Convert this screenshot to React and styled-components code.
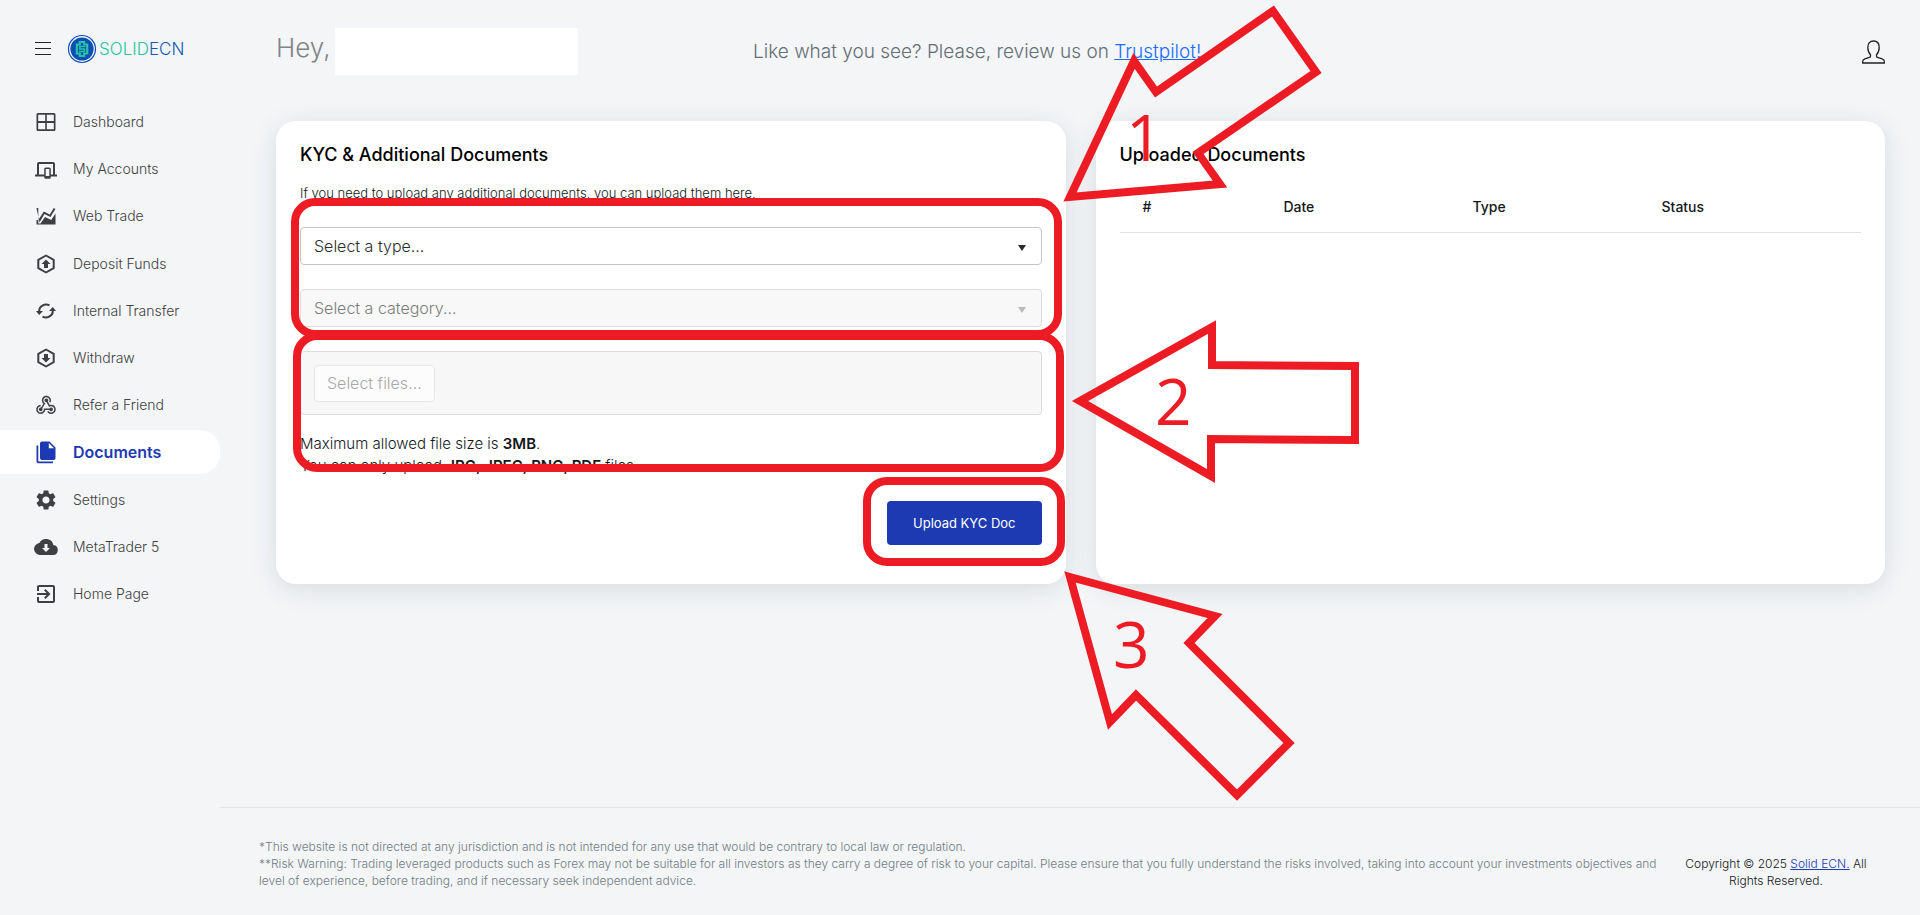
import React from "react";
import styled, { createGlobalStyle, css } from "styled-components";
import { MdSettings } from "react-icons/md";

const ink = "#3e3f42";
const brand = "#1e3ab3";
const red = "#ed1c24";

const GlobalStyle = createGlobalStyle`
  *, *::before, *::after { box-sizing: border-box; }
  body {
    margin: 0;
    background: #f3f5f7;
    color: #14171a;
    font-family: Inter, "Liberation Sans", sans-serif;
    font-size: 15px;
    font-weight: 300;
  }
  button, select { font: inherit; }
`;

const Page = styled.div`
  position: relative;
  display: flex;
  min-height: 100vh;
`;

/* ---------- sidebar ---------- */

const Sidebar = styled.aside`
  flex: 0 0 220px;
  display: flex;
  flex-direction: column;
`;

const SidebarHead = styled.div`
  display: flex;
  align-items: center;
  gap: 16px;
  height: 100px;
  padding: 0 0 2px 35px;
`;

const MenuButton = styled.button`
  display: flex;
  padding: 0;
  border: 0;
  background: none;
  color: #222;
`;

const Logo = styled.a`
  display: flex;
  align-items: center;
  gap: 2px;
  color: #27c3a3;
  font-size: 17px;
  line-height: 28px;
  text-decoration: none;
`;

const LogoAccent = styled.span`
  color: #1559b7;
`;

const NavList = styled.ul`
  display: flex;
  flex-direction: column;
  justify-content: space-between;
  height: 516px;
  margin: 0;
  padding: 0;
  list-style: none;
`;

const NavLink = styled.a`
  display: flex;
  align-items: center;
  gap: 15px;
  height: 44px;
  padding-left: 34px;
  color: ${ink};
  font-size: 14px;
  line-height: 20px;
  text-decoration: none;
  svg { flex: none; }
  ${({ $active }) =>
    $active &&
    css`
      border-radius: 0 20px 20px 0;
      background: #fff;
      color: ${brand};
      font-size: 16px;
      font-weight: 600;
    `}
`;

/* ---------- main column ---------- */

const Main = styled.div`
  flex: 1;
  min-width: 0;
  display: flex;
  flex-direction: column;
`;

const Header = styled.header`
  display: grid;
  grid-template-columns: 477px 1fr auto;
  align-items: center;
  height: 103px;
  padding: 0 35px 0 56px;
`;

const Greeting = styled.h1`
  display: flex;
  align-items: flex-start;
  gap: 5px;
  margin: 0;
  color: #828385;
  font-size: 26px;
  font-weight: 300;
  line-height: 40px;
`;

const NameBlock = styled.span`
  width: 243px;
  height: 47px;
  background: #fff;
`;

const Review = styled.p`
  margin: 0;
  color: #656e75;
  font-size: 19px;
  line-height: 24px;
  a { color: #1a6dfd; }
`;

const Cards = styled.main`
  display: grid;
  grid-template-columns: 1fr 1fr;
  gap: 30px;
  padding: 18px 35px 0 56px;
`;

const Card = styled.section`
  min-height: 463px;
  padding: 24px;
  border-radius: 20px;
  background: #fff;
  box-shadow: 0 5px 26px rgba(50, 62, 78, 0.13);
`;

const CardTitle = styled.h2`
  margin: 0;
  color: #000;
  font-size: 18px;
  font-weight: 500;
  line-height: 20px;
`;

const Form = styled.form`
  display: flex;
  flex-direction: column;
  gap: 24px;
`;

const Hint = styled.p`
  margin: 18px 0 0;
  font-size: 13px;
  line-height: 20px;
`;

const Field = styled.label`
  position: relative;
  display: block;
  &::after {
    content: "";
    position: absolute;
    top: 18px;
    right: 16px;
    border: 4px solid transparent;
    border-top: 6px solid ${({ $muted }) => ($muted ? "#b9bcbc" : "#2b2b2b")};
    border-bottom: 0;
  }
`;

const Select = styled.select`
  display: block;
  width: 100%;
  height: 38px;
  padding: 0 13px;
  appearance: none;
  border: 1px solid #c4c4c4;
  border-radius: 4px;
  background: #fff;
  color: #2b2b2b;
  font-size: 16px;
  &:disabled {
    border-color: #dcdcdc;
    background: #f8f8f8;
    color: #7c7c7c;
    opacity: 1;
  }
`;

const DropZone = styled.div`
  display: flex;
  align-items: center;
  height: 64px;
  padding: 0 13px;
  border: 1px solid #dcdcdc;
  border-radius: 4px;
  background: #f7f7f7;
`;

const PickButton = styled.button`
  height: 37px;
  padding: 0 12px;
  border: 1px solid #e6e6e6;
  border-radius: 4px;
  background: #fcfcfc;
  color: #a8a8a8;
  font-size: 16px;
`;

const Limits = styled.p`
  margin: -6px 0 0;
  line-height: 22px;
  strong { font-weight: 600; }
`;

const SubmitButton = styled.button`
  align-self: flex-end;
  height: 44px;
  padding: 0 26px;
  border: 0;
  border-radius: 4px;
  background: ${brand};
  color: #fff;
  font-size: 13px;
  font-weight: 400;
`;

const Table = styled.table`
  width: 100%;
  margin-top: 17px;
  border-collapse: collapse;
  table-layout: fixed;
`;

const Th = styled.th`
  width: ${({ $width }) => $width};
  height: 50px;
  padding: 0 23px;
  border-bottom: 1px solid #dee2e6;
  font-size: 14px;
  font-weight: 500;
  text-align: left;
`;

/* ---------- footer ---------- */

const Footer = styled.footer`
  display: flex;
  align-items: flex-end;
  gap: 16px;
  margin-top: auto;
  padding: 30px 44px 26px 39px;
  border-top: 1px solid #e1e4e8;
  font-size: 12px;
  line-height: 17px;
`;

const Disclaimer = styled.p`
  flex: 1;
  margin: 0;
  color: #727c82;
`;

const Copyright = styled.p`
  flex: 0 0 200px;
  margin: 0;
  text-align: center;
  a { color: ${brand}; }
`;

/* ---------- annotations ---------- */

const Annotations = styled.svg`
  position: absolute;
  top: 0;
  left: 0;
  width: 100%;
  pointer-events: none;
  fill: none;
  stroke: ${red};
  stroke-width: 8px;
  stroke-miterlimit: 10;
  text {
    fill: ${red};
    stroke: none;
    font-family: "Open Sans", "Noto Sans", sans-serif;
    font-size: 64px;
    font-weight: 400;
  }
`;

const Glyph = ({ size = 24, children, ...rest }) => (
  <svg width={size} height={size} viewBox="0 0 24 24" fill="currentColor" aria-hidden="true" {...rest}>
    {children}
  </svg>
);

const DashboardIcon = () => (
  <Glyph>
    <path d="M4 3h16a1.500 1.500 0 0 1 1.500 1.500v15A1.500 1.500 0 0 1 20 21H4a1.500 1.500 0 0 1-1.500-1.500v-15A1.500 1.500 0 0 1 4 3zm.2 1.700V11h7V4.700zm8.600 0V11h7V4.700zM4.200 13v6.300h7V13zm8.600 0v6.300h7V13z" fillRule="evenodd" />
  </Glyph>
);
const AccountsIcon = () => (
  <Glyph>
    <path d="M3 17.500V7a2 2 0 0 1 2-2h14a2 2 0 0 1 2 2v10.500h2v2h-6.200v.8a1.500 1.500 0 0 1-1.500 1.500h-3.600a1.500 1.500 0 0 1-1.500-1.500v-.8H1v-2zm2 0h5.200V12a1.500 1.500 0 0 1 1.500-1.500h3.600a1.500 1.500 0 0 1 1.500 1.500v5.500H19V7H5zm6.700-5.500v7h3.600v-7z" fillRule="evenodd" />
  </Glyph>
);
const ChartIcon = () => (
  <Glyph>
    <path d="M2.500 4h1.800v12L9.800 7.500l6 3 4-6.500 1.600.9-5 8-6-3L5.500 18.500z" />
    <path d="M2.500 16v4.500h19V9.500l-4.300 6.500-6.200-3-4.500 6.500H4.300V16z" />
  </Glyph>
);
const HexArrow = ({ up }) => (
  <Glyph>
    <path d="M12 3.500l7.700 4.300v8.400L12 20.500l-7.700-4.300V7.800z" fill="none" stroke="currentColor" strokeWidth="2" strokeLinejoin="round" />
    <path d="M12 7.500l4.500 4.500H14v4h-4v-4H7.500z" transform={up ? undefined : "rotate(180 12 12)"} />
  </Glyph>
);
const TransferIcon = () => (
  <Glyph>
    <path d="M5.200 12.500A7 6.500 0 0 1 15.500 6.400M18.800 11.500A7 6.500 0 0 1 8.500 17.600" fill="none" stroke="currentColor" strokeWidth="2" />
    <path d="M2 12h7l-3.800 4zM22 12h-7l3.800-4z" />
  </Glyph>
);
const WebhookIcon = () => (
  <Glyph>
    <path d="M10.460 19C9 21.070 6.150 21.590 4.090 20.150C2.040 18.710 1.560 15.840 3 13.750C3.870 12.500 5.210 11.830 6.580 11.770L6.630 13.200C5.720 13.270 4.840 13.740 4.270 14.560C3.270 16 3.580 17.940 4.950 18.910C6.330 19.870 8.260 19.500 9.260 18.070C9.570 17.620 9.750 17.130 9.820 16.630V15.620L15.400 15.580L15.470 15.470C16 14.550 17.150 14.230 18.050 14.750C18.950 15.270 19.260 16.430 18.730 17.350C18.200 18.260 17.040 18.580 16.140 18.060C15.730 17.830 15.440 17.460 15.310 17.040L11.240 17.060C11.130 17.730 10.870 18.380 10.460 19M17.740 11.860C20.270 12.170 22.070 14.440 21.760 16.930C21.450 19.430 19.150 21.200 16.620 20.890C15.130 20.710 13.900 19.860 13.190 18.680L14.430 17.960C14.920 18.730 15.750 19.280 16.750 19.410C18.500 19.620 20.050 18.430 20.260 16.760C20.470 15.090 19.230 13.560 17.500 13.350C16.960 13.290 16.440 13.360 15.970 13.530L15.120 13.970L12.540 9.200H12.320C11.260 9.160 10.410 8.290 10.440 7.250C10.470 6.210 11.400 5.400 12.450 5.440C13.500 5.500 14.330 6.350 14.300 7.390C14.280 7.830 14.110 8.230 13.840 8.540L15.740 12.050C16.360 11.850 17.040 11.780 17.740 11.860M8.250 9.140C7.250 6.790 8.310 4.100 10.620 3.120C12.940 2.140 15.620 3.250 16.620 5.600C17.210 6.970 17.090 8.470 16.420 9.670L15.180 8.950C15.600 8.140 15.670 7.150 15.270 6.220C14.590 4.620 12.780 3.850 11.230 4.500C9.670 5.160 8.970 7 9.650 8.600C9.930 9.260 10.400 9.770 10.970 10.110L11.360 10.320L8.290 15.310C8.320 15.360 8.360 15.420 8.390 15.500C8.880 16.410 8.540 17.560 7.620 18.050C6.710 18.540 5.560 18.180 5.060 17.240C4.570 16.310 4.910 15.160 5.830 14.670C6.220 14.460 6.650 14.410 7.060 14.500L9.370 10.730C8.900 10.300 8.500 9.760 8.250 9.140Z" />
  </Glyph>
);
const FilesIcon = () => (
  <Glyph>
    <path d="M8 1.500h7.500l6 6v10.500a2 2 0 0 1-2 2H8a2 2 0 0 1-2-2V3.500a2 2 0 0 1 2-2zM14.800 3v5.200H20zM2.500 5.500h1.800V21.500H19v1.800H4.300a1.800 1.800 0 0 1-1.800-1.800z" fillRule="evenodd" />
  </Glyph>
);
const CloudIcon = () => (
  <Glyph>
    <path d="M19.350 10.040A7.500 7.500 0 0 0 5.350 8.040 6 6 0 0 0 6 20h13a5 5 0 0 0 .350-9.960zM10.500 9h3v4H16l-4 4-4-4h2.500z" fillRule="evenodd" />
  </Glyph>
);
const ExitIcon = () => (
  <Glyph>
    <path d="M19 3H5C3.890 3 3 3.890 3 5V9H5V5H19V19H5V15H3V19A2 2 0 0 0 5 21H19A2 2 0 0 0 21 19V5C21 3.890 20.100 3 19 3M10.080 15.580L11.500 17L16.500 12L11.500 7L10.080 8.410L12.670 11H3V13H12.670L10.080 15.580Z" />
  </Glyph>
);

const LogoMark = () => (
  <svg width="30" height="30" viewBox="0 0 30 30" fill="none" aria-hidden="true">
    <circle cx="15" cy="15" r="13.500" stroke="#0c4fb3" strokeWidth="1.200" />
    <circle cx="15" cy="15" r="11.600" fill="#0a4fb6" />
    <path d="M12.800 8h4.400v2.500h3v9h-3V22h-4.400v-2.500h-3v-9h3z" stroke="#27c3a3" strokeWidth="2.200" />
    <path d="M18.500 12.500h-5.700v2.500h4.700v2.500H12" stroke="#27c3a3" strokeWidth="1.500" />
  </svg>
);

const nav = [
  ["Dashboard", <DashboardIcon />],
  ["My Accounts", <AccountsIcon />],
  ["Web Trade", <ChartIcon />],
  ["Deposit Funds", <HexArrow up />],
  ["Internal Transfer", <TransferIcon />],
  ["Withdraw", <HexArrow />],
  ["Refer a Friend", <WebhookIcon />],
  ["Documents", <FilesIcon />],
  ["Settings", <MdSettings size={24} />],
  ["MetaTrader 5", <CloudIcon />],
  ["Home Page", <ExitIcon />],
];

const columns = [
  ["#", "19%"],
  ["Date", "25.5%"],
  ["Type", "25.5%"],
  ["Status", "30%"],
];

export default function App() {
  return (
    <>
      <GlobalStyle />
      <Page>
        <Sidebar>
          <SidebarHead>
            <MenuButton type="button" aria-label="Menu">
              <svg width="16" height="14" viewBox="0 0 16 14" stroke="currentColor" aria-hidden="true">
                <path d="M0 .5h16M0 6.500h16M0 12.500h16" />
              </svg>
            </MenuButton>
            <Logo href="#home" aria-label="SolidECN">
              <LogoMark />
              <span>SOLID<LogoAccent>ECN</LogoAccent></span>
            </Logo>
          </SidebarHead>
          <nav>
            <NavList>
              {nav.map(([label, icon]) => (
                <li key={label}>
                  <NavLink href="#" $active={label === "Documents"}>
                    {icon}
                    {label}
                  </NavLink>
                </li>
              ))}
            </NavList>
          </nav>
        </Sidebar>
        <Main>
          <Header>
            <Greeting>Hey,<NameBlock /></Greeting>
            <Review>
              Like what you see? Please, review us on <a href="#trustpilot">Trustpilot!</a>
            </Review>
            <MenuButton type="button" aria-label="Profile">
              <svg width="23" height="24" viewBox="0 0 23 24" fill="none" stroke="currentColor" strokeWidth="1.300" aria-hidden="true">
                <path d="M8.500 14.800C6.700 13 5.800 10.500 5.800 7.300 5.800 3.500 8 1 11.500 1s5.700 2.500 5.700 6.300c0 3.200-.9 5.700-2.700 7.500v1.400c0 .6.300 1 1 1.200l4.600 1.500c1.500.5 2.200 1.400 2.200 2.700V23H.7v-1.400c0-1.300.7-2.200 2.200-2.700l4.600-1.500c.7-.2 1-.6 1-1.200z" />
              </svg>
            </MenuButton>
          </Header>
          <Cards>
            <Card>
              <CardTitle>KYC &amp; Additional Documents</CardTitle>
              <Form>
                <Hint>If you need to upload any additional documents, you can upload them here.</Hint>
                <Field>
                  <Select aria-label="Type" defaultValue="">
                    <option value="">Select a type...</option>
                  </Select>
                </Field>
                <Field $muted>
                  <Select aria-label="Category" defaultValue="" disabled>
                    <option value="">Select a category...</option>
                  </Select>
                </Field>
                <DropZone>
                  <PickButton type="button" disabled>Select files...</PickButton>
                </DropZone>
                <Limits>
                  Maximum allowed file size is <strong>3MB</strong>.
                  <br />
                  You can only upload <strong>JPG, JPEG, PNG, PDF</strong> files.
                </Limits>
                <SubmitButton type="submit">Upload KYC Doc</SubmitButton>
              </Form>
            </Card>
            <Card>
              <CardTitle>Uploaded Documents</CardTitle>
              <Table>
                <thead>
                  <tr>
                    {columns.map(([label, width]) => (
                      <Th key={label} $width={width} scope="col">{label}</Th>
                    ))}
                  </tr>
                </thead>
              </Table>
            </Card>
          </Cards>
          <Footer>
            <Disclaimer>
              *This website is not directed at any jurisdiction and is not intended for any use that would be contrary to local law or regulation.
              <br />
              **Risk Warning: Trading leveraged products such as Forex may not be suitable for all investors as they carry a degree of risk to your capital. Please ensure that you fully understand the risks involved, taking into account your investments objectives and level of experience, before trading, and if necessary seek independent advice.
            </Disclaimer>
            <Copyright>
              Copyright © 2025 <a href="#solid-ecn">Solid ECN.</a> All Rights Reserved.
            </Copyright>
          </Footer>
        </Main>
        <Annotations viewBox="0 0 1920 915">
          <rect x="295" y="202" width="763" height="132" rx="20" />
          <rect x="297" y="336" width="763" height="132" rx="20" />
          <rect x="867" y="481" width="194" height="81" rx="20" />
          <polygon points="1070,197 1134,61 1156,92 1273,11 1316,72 1198,153 1220,184" />
          <polygon points="1080,401 1212,327 1212,365 1355,366 1355,440 1211,439 1211,476" />
          <polygon points="1070,577 1215,616 1189,643 1289,743 1237,795 1136,695 1110,722" />
          <text x="1126" y="161">1</text>
          <text x="1155" y="425">2</text>
          <text x="1113" y="668">3</text>
        </Annotations>
      </Page>
    </>
  );
}
